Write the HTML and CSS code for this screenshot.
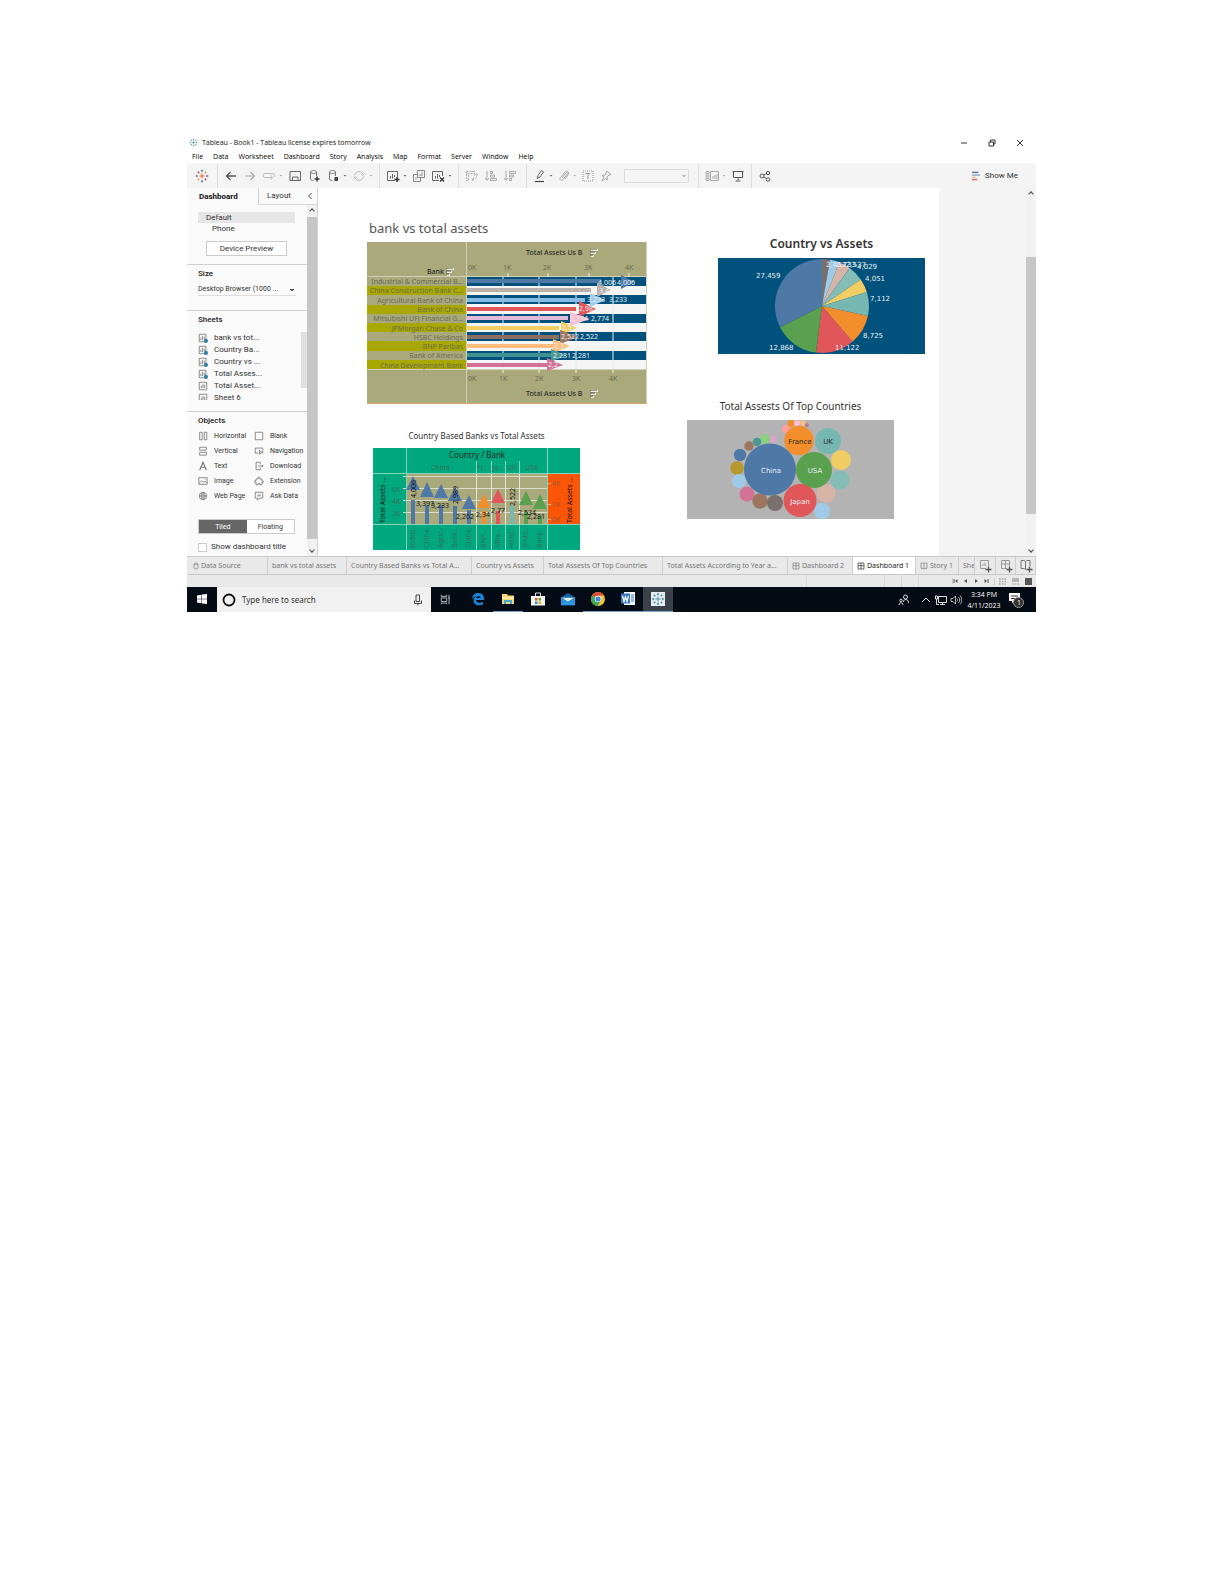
FILE: index.html
```html
<!DOCTYPE html>
<html lang="en">
<head>
<meta charset="utf-8">
<title>Tableau - Book1</title>
<link rel="stylesheet" href="styles.css">
</head>
<body>
<svg class="defs" aria-hidden="true">
  <symbol id="spark" viewBox="0 0 14 14"><path d="M7 4.500v5M4.500 7h5" stroke="#e8762d" stroke-width="1.200"/><path d="M7 0.500v2.600M5.800 1.800h2.400M7 11v2.600M5.800 12.200h2.400" stroke="#5b879b"/><path d="M1.800 5.800v2.400M.6 7h2.400M12.200 5.800v2.400M11 7h2.400" stroke="#7a79a8"/><path d="M3.500 2.500v2M2.500 3.500h2M10.500 9.500v2M9.500 10.500h2" stroke="#c0504d"/><path d="M10.500 2.500v2M9.500 3.500h2M3.500 9.500v2M2.500 10.500h2" stroke="#e0a040"/></symbol>
  <symbol id="spark-blue" viewBox="0 0 14 14"><path d="M7 4.500v5M4.500 7h5M7 1v2.400M5.800 2.200h2.400M7 10.600v2.400M5.800 11.800h2.400M2.200 5.800v2.400M1 7h2.400M11.800 5.800v2.400M10.600 7h2.400M3.500 2.500v2M2.500 3.500h2M10.500 9.500v2M9.500 10.500h2M10.500 2.500v2M9.500 3.500h2M3.500 9.500v2M2.500 10.500h2" stroke="#4a90a8" fill="none"/></symbol>
  <symbol id="sheet" viewBox="0 0 12 12"><path d="M1.500 1.500h9v9h-9zM4 5.500v3M6 3.500v5M8 4.500v4" fill="none" stroke="#777"/></symbol>
  <symbol id="sheet-used" viewBox="0 0 12 12"><path d="M1.500 1.500h8v9h-8zM3.500 5.500v3M5.500 3.500v5M7.500 4.500v3" fill="none" stroke="#777"/><circle cx="9.500" cy="9.500" r="2.500" fill="#2d7fa3"/></symbol>
  <symbol id="grid" viewBox="0 0 12 12"><path d="M1.500 1.500h9v9h-9zM1.500 5.500h9M6 1.500v9" fill="none" stroke="currentColor"/></symbol>
  <symbol id="book" viewBox="0 0 12 12"><path d="M6 2.500v8M1.500 1.500h3L6 2.500l1.500-1h3v8h-3l-1.500 1-1.500-1h-3z" fill="none" stroke="currentColor"/></symbol>
  <symbol id="sort" viewBox="0 0 8 8"><path d="M1 1h7M1 4h5M1 7h3" stroke="#fff" stroke-width="1.600"/><path d="M0 0h7M0 3h5M0 6h3" stroke="#555"/></symbol>
</svg>

<div class="window">
  <header class="titlebar">
    <svg class="app-mark"><use href="#spark-blue"/></svg>
    <h1>Tableau - Book1 - Tableau license expires tomorrow</h1>
    <div class="win-controls">
      <button aria-label="Minimize"><svg viewBox="0 0 8 8"><path d="M1 4h6" stroke="#333"/></svg></button>
      <button aria-label="Restore"><svg viewBox="0 0 8 8"><path d="M1 3h4.500v4H1zM2.500 3V1H7v4H5.500" fill="none" stroke="#333"/></svg></button>
      <button aria-label="Close"><svg viewBox="0 0 8 8"><path d="M1 1l6 6M7 1l-6 6" stroke="#333"/></svg></button>
    </div>
  </header>

  <nav class="menubar" aria-label="Main menu">
    <button>File</button><button>Data</button><button>Worksheet</button><button>Dashboard</button><button>Story</button><button>Analysis</button><button>Map</button><button>Format</button><button>Server</button><button>Window</button><button>Help</button>
  </nav>

  <div class="toolbar">
    <div class="tools"><button aria-label="Start page"><svg viewBox="0 0 14 14"><use href="#spark"/></svg></button></div>
    <div class="tools">
      <button aria-label="Undo"><svg viewBox="0 0 14 14"><path d="M12 7H2.500M6.500 3L2.500 7l4 4" fill="none" stroke="#555" stroke-width="1.300"/></svg></button>
      <button aria-label="Redo"><svg viewBox="0 0 14 14"><path d="M2 7h9.500M7.500 3l4 4-4 4" fill="none" stroke="#aaa" stroke-width="1.200"/></svg></button>
      <button aria-label="Replay"><svg viewBox="0 0 14 14"><path d="M10 8.500H3A2 2 0 0 1 3 4.500h8a2 2 0 0 1 1 3.500M9 6.500l1.500 2L9 10.500" fill="none" stroke="#bbb"/></svg></button>
      <span class="caret pale"></span>
      <button aria-label="Save"><svg viewBox="0 0 14 14"><path d="M2 2.500h10.500v9H2zM4.500 11V8h5.500v3.500" fill="none" stroke="#666"/></svg></button>
      <button aria-label="New data source"><svg viewBox="0 0 14 14"><path d="M3.500 3c0-2 6-2 6 0s-6 2-6 0v7c0 1 2 1.500 3 1.500M9.500 3v4" fill="none" stroke="#777"/><path d="M10 7.500v5M7.500 10h5" stroke="#333" stroke-width="1.500"/></svg></button>
      <button aria-label="Pause updates"><svg viewBox="0 0 14 14"><path d="M3.500 3c0-2 6-2 6 0s-6 2-6 0v7c0 1 2 1.500 3 1.500M9.500 3v4" fill="none" stroke="#777"/><path d="M8.500 8h3.500v4H8.500z" fill="#444"/></svg></button>
      <span class="caret"></span>
      <button aria-label="Refresh"><svg viewBox="0 0 14 14"><path d="M2.500 6.500a4.500 4.500 0 0 1 8.500-1.500M11.500 7.500a4.500 4.500 0 0 1-8.500 1.500M12.500 4.500l-1.500 2-2-1.500M1.500 9.500L3 7.500 5 9" fill="none" stroke="#bbb"/></svg></button>
      <span class="caret pale"></span>
    </div>
    <div class="tools">
      <button aria-label="New worksheet"><svg viewBox="0 0 14 14"><path d="M9 11.500H1.500v-9h10V8M4.500 7v2.500M6.500 5v4.500M8.500 6v2" fill="none" stroke="#666"/><path d="M11 8v5M8.500 10.500h5" stroke="#333" stroke-width="1.500"/></svg></button>
      <span class="caret"></span>
      <button aria-label="Duplicate"><svg viewBox="0 0 14 14"><path d="M5.500 1.500h7v7h-7zM5.500 5.500h-4v7h7V8.500M8 5v2M10 3.500V7M4 8.500v2" fill="none" stroke="#888"/></svg></button>
      <button aria-label="Clear sheet"><svg viewBox="0 0 14 14"><path d="M8 11.500H1.500v-9h10V7M4.500 7v2.500M6.500 5v4.500M8.500 6v2" fill="none" stroke="#666"/><path d="M9 8.500l4 4M13 8.500l-4 4" stroke="#333" stroke-width="1.300"/></svg></button>
      <span class="caret"></span>
    </div>
    <div class="tools wide-end">
      <button aria-label="Swap"><svg viewBox="0 0 14 14"><path d="M1.500 2.500h8v2h-8zM1.500 5v6.500h2V5M11 5.500c1.500 3-.5 5-4 5M9 8.500l-2 2 2 2M9.500 6.500l1.500-2 2 1.500" fill="none" stroke="#aaa" stroke-dasharray="2 1"/></svg></button>
      <button aria-label="Sort ascending"><svg viewBox="0 0 14 14"><path d="M3 2v9M1 9l2 2.500L5 9M6.500 2.500h2v2h-2zM6.500 6h4v2h-4zM6.500 9.500h6v2h-6z" fill="none" stroke="#aaa"/></svg></button>
      <button aria-label="Sort descending"><svg viewBox="0 0 14 14"><path d="M3 2v9M1 9l2 2.500L5 9M6.500 2.500h6v2h-6zM6.500 6h4v2h-4zM6.500 9.500h2v2h-2z" fill="none" stroke="#aaa"/></svg></button>
    </div>
    <div class="tools tight">
      <button aria-label="Highlight"><svg viewBox="0 0 14 14"><path d="M4 9.500l1-3 3.500-5 2 1.500L7 8z" fill="none" stroke="#666"/><path d="M2 12.500h9" stroke="#444" stroke-width="1.200"/></svg></button>
      <span class="caret"></span>
      <button aria-label="Group"><svg viewBox="0 0 14 14"><path d="M5 9l4-5c1-1 2 0 1.500 1L6 10.500c-2 2-4 0-2.500-2L8 3c2-2 5 0 3 3L8 10" fill="none" stroke="#aaa"/></svg></button>
      <span class="caret pale"></span>
      <button aria-label="Labels"><svg viewBox="0 0 14 14"><path d="M2 2h10v10H2z" fill="none" stroke="#999" stroke-dasharray="1 1"/><path d="M4.500 4.500h5M7 4.500V10" stroke="#999"/></svg></button>
      <button aria-label="Pin"><svg viewBox="0 0 14 14"><path d="M8 2l4 3.500-2 .5-2 2 .5 3-2-1.500L3 12l2-4-2-1.500 3-.5z" fill="none" stroke="#aaa"/></svg></button>
      <select class="fit" aria-label="Fit" disabled><option></option></select>
    </div>
    <div class="tools">
      <button aria-label="Cards"><svg viewBox="0 0 14 14"><path d="M5.500 2.500h8v9h-8zM1 2.500h3v2H1zM1 6h3v2H1zM1 9.500h3v2H1zM8 7v3M10 6v4M12 5v5" fill="none" stroke="#aaa"/></svg></button>
      <span class="caret pale"></span>
      <button aria-label="Presentation mode"><svg viewBox="0 0 14 14"><path d="M1.500 2.500h11M2.500 3v5.500h9V3M7 8.500v3M4.500 12h5" fill="none" stroke="#555"/></svg></button>
    </div>
    <div class="tools">
      <button aria-label="Share"><svg viewBox="0 0 14 14"><g fill="none" stroke="#555"><circle cx="4" cy="7" r="2"/><circle cx="10" cy="4" r="1.700"/><circle cx="10" cy="10.500" r="1.700"/><path d="M6 6l2.500-1.500M6 8l2.500 1.500"/></g></svg></button>
    </div>
    <button class="show-me"><svg viewBox="0 0 10 10"><path d="M0 1h7" stroke="#6b6a94" stroke-width="1.600"/><path d="M0 4h9" stroke="#8ba7cb" stroke-width="1.500"/><path d="M0 6.500h4" stroke="#f0b07a" stroke-width="1.200"/><path d="M0 9h6" stroke="#dd6b6b" stroke-width="1.600"/></svg>Show Me</button>
  </div>

  <main class="workspace">
    <aside class="side">
      <div class="side-tabs"><button class="on">Dashboard</button><button class="off">Layout<svg viewBox="0 0 6 8"><path d="M4.500 1L1.500 4l3 3" fill="none" stroke="#555"/></svg></button></div>
      <div class="side-scroll">
        <div class="side-body">
          <section class="devices">
            <ul><li class="picked">Default</li><li class="nested">Phone</li></ul>
            <button class="preview">Device Preview</button>
          </section>
          <section class="size">
            <h2><label for="size">Size</label></h2>
            <select id="size"><option>Desktop Browser (1000 ...</option></select>
          </section>
          <section class="sheets">
            <h2>Sheets</h2>
            <div class="sheet-list">
              <ul>
                <li><svg><use href="#sheet-used"/></svg>bank vs tot...</li>
                <li><svg><use href="#sheet-used"/></svg>Country Ba...</li>
                <li><svg><use href="#sheet-used"/></svg>Country vs ...</li>
                <li><svg><use href="#sheet-used"/></svg>Total Asses...</li>
                <li><svg><use href="#sheet"/></svg>Total Asset...</li>
                <li><svg><use href="#sheet"/></svg>Sheet 6</li>
              </ul>
              <span class="list-thumb"></span>
            </div>
          </section>
          <section class="objects">
            <h2>Objects</h2>
            <ul>
              <li><svg viewBox="0 0 12 12"><path d="M2 1.500h3v9H2zM7.500 1.500h3v9h-3z"/></svg>Horizontal</li>
              <li><svg viewBox="0 0 12 12"><path d="M1.500 1.500h9v9h-9z"/></svg>Blank</li>
              <li><svg viewBox="0 0 12 12"><path d="M2 5V1.500h8V5zM2 7.500h8V11H2z"/></svg>Vertical</li>
              <li><svg viewBox="0 0 12 12"><path d="M5 8.500H1.500v-6h9v6H10M6 5l1 5 1.500-2H10z"/></svg>Navigation</li>
              <li><svg viewBox="0 0 12 12"><path d="M2 11L6 1.500 10 11M3.500 7.500h5" stroke-width="1.400"/></svg>Text</li>
              <li><svg viewBox="0 0 12 12"><path d="M7.500 4V1.500h-5v9h5V8M5 6h6M9.500 4.500L11 6 9.500 7.500"/></svg>Download</li>
              <li><svg viewBox="0 0 12 12"><path d="M1 2h10v8H1zM1.500 8.500l3-3 2 2 2-1 2 1.500M8 4h1"/></svg>Image</li>
              <li><svg viewBox="0 0 12 12"><path d="M2.500 10.500V8H1V5.500h1.500V3.500H5v-2h2v2h2.500V6H11v2H9.500v2.500H7V9H5v1.500z"/></svg>Extension</li>
              <li><svg viewBox="0 0 12 12"><circle cx="6" cy="6" r="4.500"/><path d="M1.500 6h9M6 1.500v9M6 1.500c-3 3-3 6 0 9M6 1.500c3 3 3 6 0 9"/></svg>Web Page</li>
              <li><svg viewBox="0 0 12 12"><path d="M1.500 1.500h9v7H6.500L4 11V8.500H1.500zM4.500 5v1.500M6 3.500v3M7.500 4.500v2"/></svg>Ask Data</li>
            </ul>
            <div class="segmented"><button class="on">Tiled</button><button>Floating</button></div>
            <label class="show-title"><input type="checkbox">Show dashboard title</label>
          </section>
        </div>
        <div class="scrollbar side-bar"><i class="up"></i><b></b><i class="down"></i></div>
      </div>
    </aside>

    <div class="dashboard">
      <div class="column left">
        <figure class="banks">
          <figcaption>bank vs total assets</figcaption>
          <svg viewBox="0 0 280 162" class="chart" role="img" aria-label="bank vs total assets">
            <path d="M0 0h280v162H0z" fill="#a9a97c"/>
            <path d="M100 35h180v92H100z" fill="#f5f5f5"/>
            <path d="M0 44h99v9H0zM0 63h99v9H0zM0 81h99v9H0zM0 99h99v10H0zM0 118h99v9H0z" fill="#a8a800"/>
            <path d="M100 35h179v9H100zM100 53h179v9H100zM100 72h179v9H100zM100 90h179v9H100zM100 109h179v9H100z" fill="#00527c"/>
            <path d="M136 35v92M172 35v92M209 35v92M246 35v92" stroke="#e8eef2"/>
            <path d="M99.500 0v162M0 34.500h280M0 127.500h280M279.500 0v162" stroke="#d0d0b8"/>
            <path d="M141 31v4M181 31v4M222 31v4M262 31v4M136 128v3M172 128v3M209 128v3M246 128v3" stroke="#f0f0e6"/>
            <path d="M0 161.500h280" stroke="#d6a86c"/>
            <g class="bars">
              <path d="M100 39h134" stroke="#4e79a7"/><path d="M100 48h124" stroke="#bab0ac"/><path d="M100 58h118" stroke="#85bde8"/><path d="M100 67h109" stroke="#e15759"/><path d="M100 76h101" stroke="#e3b9dc"/><path d="M100 86h92" stroke="#f1ce63"/><path d="M100 95h92" stroke="#8c6d62"/><path d="M100 104h86" stroke="#ffbe7d"/><path d="M100 113h84" stroke="#3f9292"/><path d="M100 123h80" stroke="#d37295"/>
            </g>
            <path d="M254 33l14 7-14 7z" fill="#4e79a7"/><path d="M230 41l14 7-14 7z" fill="#bab0ac"/><path d="M223 51l15 7-15 7z" fill="#a0cbe8"/><path d="M212 59l17 8-17 8z" fill="#e15759"/><path d="M203 70l20 7-20 7z" fill="#fabfd2"/><path d="M194 79l16 7-16 7z" fill="#f1ce63"/><path d="M193 88l18 7-18 7z" fill="#9d7660"/><path d="M186 97l17 7-17 7z" fill="#ffbe7d"/><path d="M184 107l14 6-14 7z" fill="#499894"/><path d="M180 116l16 7-16 6z" fill="#d37295"/>
            <g class="t7 white"><text x="231" y="43">4,006</text><text x="250" y="43">4,006</text><text x="232" y="51">3,4</text><text x="220" y="60">3,233</text><text x="242" y="60">3,233</text><text x="212" y="69">2,98</text><text x="203" y="79">2,774</text><text x="224" y="79">2,774</text><text x="195" y="88">2,5</text><text x="194" y="97">2,522</text><text x="213" y="97">2,522</text><text x="187" y="106">2,3</text><text x="186" y="116">2,281</text><text x="205" y="116">2,281</text><text x="181" y="125">2,2</text></g>
            <g class="t7 olive end"><text x="96" y="42">Industrial &amp; Commercial B...</text><text x="96" y="51">China Construction Bank C...</text><text x="96" y="61">Agricultural Bank of China</text><text x="96" y="70">Bank of China</text><text x="96" y="79">Mitsubishi UFJ Financial G...</text><text x="96" y="89">JPMorgan Chase &amp; Co</text><text x="96" y="98">HSBC Holdings</text><text x="96" y="107">BNP Paribas</text><text x="96" y="116">Bank of America</text><text x="96" y="126">China Development Bank</text></g>
            <g class="t7 olive"><text x="101" y="28">0K</text><text x="136" y="28">1K</text><text x="176" y="28">2K</text><text x="217" y="28">3K</text><text x="258" y="28">4K</text><text x="101" y="139">0K</text><text x="132" y="139">1K</text><text x="168" y="139">2K</text><text x="205" y="139">3K</text><text x="242" y="139">4K</text></g>
            <g class="t7 dark strong"><text x="60" y="32">Bank</text><text x="159" y="13">Total Assets Us B</text><text x="159" y="154">Total Assets Us B</text></g>
            <use href="#sort" x="79" y="26" width="8" height="8"/><use href="#sort" x="223" y="7" width="8" height="8"/><use href="#sort" x="223" y="148" width="8" height="8"/>
          </svg>
        </figure>
        <figure class="countries">
          <figcaption>Country Based Banks vs Total Assets</figcaption>
          <svg viewBox="0 0 207 102" class="chart" role="img" aria-label="Country Based Banks vs Total Assets">
            <path d="M0 0h207v102H0z" fill="#00a87e"/>
            <path d="M33 26h141v50H33z" fill="#a9a97c"/>
            <path d="M175 26h32v50h-32z" fill="#fb5607"/>
            <path d="M30 28.500h144M30 40.500h144M30 52.500h144M30 64.500h144" stroke="#dcdcc8"/>
            <path d="M174 35.500h4M174 56.500h4M174 71.500h4" stroke="#f8b18e"/>
            <path d="M0 25.500h207M0 76.500h207M33.500 0v102M174.500 0v102M103.500 13v89M118.500 13v89M132.500 13v89M146.500 13v89" stroke="#86d3bb" fill="none"/>
            <path d="M103.500 26v50M118.500 26v50M132.500 26v50M146.500 26v50" stroke="#e6e6da"/>
            <g stroke-width="4"><path d="M40 52v24M54 57v19M68 57v19M82 58v18M96 62v14" stroke="#4e79a7"/><path d="M111 63v13" stroke="#f28e2b"/><path d="M125 63v13" stroke="#e15759"/><path d="M139 58v18" stroke="#76b7b2"/><path d="M153 64v12M167 68v8" stroke="#59a14f"/></g>
            <path d="M40 28l7 14H33zM54 34l7 15H47zM68 36l7 14H61zM82 39l7 14H75zM96 47l7 14H89z" fill="#4e79a7"/><path d="M111 46l7 14h-14z" fill="#f28e2b"/><path d="M125 41l7 14h-14z" fill="#e15759"/><path d="M153 43l7 14h-14zM167 46l7 15h-14z" fill="#59a14f"/>
            <g class="t7 ink"><text x="43" y="58">3,397</text><text x="58" y="60">3,233</text><text x="83" y="71">2,202</text><text x="103" y="69">2,34</text><text x="118" y="65">2,77</text><text x="145" y="67">2,534</text><text x="154" y="71">2,281</text><text transform="translate(43 50) rotate(-90)">4,006</text><text transform="translate(85 56) rotate(-90)">2,989</text><text transform="translate(142 58) rotate(-90)">2,522</text><text transform="translate(12 75) rotate(-90)">Total Assets ...</text><text transform="translate(199 75) rotate(-90)">Total Assets ...</text></g>
            <g class="t7 green"><text x="58" y="22">China</text><text x="104" y="22">Fr..</text><text x="119" y="22">Ja..</text><text x="134" y="22">UK</text><text x="152" y="22">USA</text><text x="19" y="44">6K</text><text x="19" y="56">4K</text><text x="19" y="68">2K</text><text transform="translate(42 100) rotate(-90)">Indus..</text><text transform="translate(56 100) rotate(-90)">China..</text><text transform="translate(70 100) rotate(-90)">Agric..</text><text transform="translate(84 100) rotate(-90)">Bank..</text><text transform="translate(98 100) rotate(-90)">China..</text><text transform="translate(113 100) rotate(-90)">BNP..</text><text transform="translate(127 100) rotate(-90)">Mits..</text><text transform="translate(141 100) rotate(-90)">HSBC..</text><text transform="translate(155 100) rotate(-90)">JPMo..</text><text transform="translate(169 100) rotate(-90)">Bank..</text></g>
            <g class="t7 rust"><text x="179" y="38">4K</text><text x="179" y="59">2K</text><text x="179" y="74">0K</text></g>
            <text class="t8 dark" x="76" y="10">Country / Bank</text>
          </svg>
        </figure>
      </div>
      <div class="column right">
        <figure class="pie">
          <figcaption>Country vs Assets</figcaption>
          <svg viewBox="0 0 207 96" class="chart" role="img" aria-label="Country vs Assets">
            <path d="M0 0h207v96H0z" fill="#00527c"/>
            <path d="M104 48V1A47 47 0 0 1 112 1.700z" fill="#79706e"/><path d="M104 48L112 1.700A47 47 0 0 1 121.300 4.300z" fill="#a0cbe8"/><path d="M104 48L121.300 4.300A47 47 0 0 1 131.600 10z" fill="#d7b5a6"/><path d="M104 48L131.600 10A47 47 0 0 1 142.700 21.400z" fill="#86bcb6"/><path d="M104 48L142.700 21.400A47 47 0 0 1 148.800 33.900z" fill="#f1ce63"/><path d="M104 48L148.800 33.900A47 47 0 0 1 149.900 58.100z" fill="#76b7b2"/><path d="M104 48L149.900 58.100A47 47 0 0 1 134.500 83.800z" fill="#f28e2b"/><path d="M104 48L134.500 83.800A47 47 0 0 1 98 94.600z" fill="#e15759"/><path d="M104 48L98 94.600A47 47 0 0 1 62.100 69.300z" fill="#59a14f"/><path d="M104 48L62.100 69.300A47 47 0 0 1 104 1z" fill="#4e79a7"/>
            <g class="t7 white"><text x="38" y="20">27,459</text><text x="108" y="9">2,457</text><text x="118" y="9">2,733</text><text x="128" y="9">2,537</text><text x="139" y="11">4,029</text><text x="147" y="23">4,051</text><text x="152" y="43">7,112</text><text x="145" y="80">8,725</text><text x="117" y="92">11,122</text><text x="51" y="92">12,868</text></g>
          </svg>
        </figure>
        <figure class="bubbles">
          <figcaption>Total Assests Of Top Countries</figcaption>
          <svg viewBox="0 0 207 99" class="chart" role="img" aria-label="Total Assests Of Top Countries">
            <path d="M0 0h207v99H0z" fill="#b3b3b3"/>
            <circle cx="99" cy="9" r="4" fill="#ff9d9a"/><circle cx="104" cy="3.500" r="3.500" fill="#f28e2b"/><circle cx="110" cy="3" r="3" fill="#fabfd2"/><circle cx="116" cy="3" r="2.700" fill="#ffbe7d"/><circle cx="120" cy="5" r="2" fill="#b07aa1"/><circle cx="86" cy="19" r="4" fill="#d4a6c8"/><circle cx="78" cy="19" r="4.700" fill="#8cd17d"/><circle cx="70" cy="22" r="4.300" fill="#499894"/><circle cx="62" cy="26" r="4.700" fill="#9d7660"/><circle cx="53" cy="35" r="6.200" fill="#4e79a7"/><circle cx="50" cy="48" r="6.800" fill="#b6992d"/><circle cx="52" cy="61" r="7" fill="#a0cbe8"/><circle cx="60" cy="74" r="7.600" fill="#d37295"/><circle cx="73" cy="81" r="7.700" fill="#9d7660"/><circle cx="88" cy="83" r="8" fill="#79706e"/>
            <circle cx="135" cy="91" r="8" fill="#a0cbe8"/><circle cx="139" cy="73" r="9.500" fill="#d7b5a6"/><circle cx="153" cy="60" r="9.700" fill="#86bcb6"/><circle cx="154" cy="40" r="10" fill="#f1ce63"/><circle cx="141" cy="21" r="13" fill="#76b7b2"/><circle cx="112" cy="20.500" r="14.700" fill="#f28e2b"/><circle cx="83" cy="49.500" r="26" fill="#4e79a7"/><circle cx="127" cy="50" r="18" fill="#59a14f"/><circle cx="113" cy="80.500" r="16.500" fill="#e15759"/>
            <g class="t7 mid"><text class="white" x="84" y="53">China</text><text class="white" x="128" y="53">USA</text><text class="white" x="113" y="84">Japan</text><text class="dark" x="113" y="24">France</text><text class="dark" x="141" y="24">UK</text></g>
          </svg>
        </figure>
      </div>
    </div>
    <div class="gutter"></div>
    <div class="scrollbar page-bar"><i class="up"></i><b></b><i class="down"></i></div>
  </main>

  <nav class="sheet-tabs" aria-label="Sheets">
    <button class="source"><svg viewBox="0 0 8 12"><path d="M1 3c0-2 6-2 6 0v6c0 2-6 2-6 0zM1 3c0 1.500 6 1.500 6 0" fill="none" stroke="currentColor"/></svg>Data Source</button>
    <button>bank vs total assets</button>
    <button>Country Based Banks vs Total A...</button>
    <button>Country vs Assets</button>
    <button>Total Assests Of Top Countries</button>
    <button>Total Assets According to Year a...</button>
    <button><svg><use href="#grid"/></svg>Dashboard 2</button>
    <button class="current"><svg><use href="#grid"/></svg>Dashboard 1</button>
    <button><svg><use href="#book"/></svg>Story 1</button>
    <button>She</button>
    <button class="add" aria-label="New worksheet"><svg viewBox="0 0 14 14"><path d="M8 9.500H2.500v-8h8V7M5 5v2M7 4v3" fill="none" stroke="#999"/><path d="M10.500 7.500v6M7.500 10.500h6" stroke="#555" stroke-width="1.300"/></svg></button>
    <button class="add" aria-label="New dashboard"><svg viewBox="0 0 14 14"><path d="M8 9.500H2.500v-8h8V7M2.500 5h8M6.500 1.500v8" fill="none" stroke="#999"/><path d="M10.500 7.500v6M7.500 10.500h6" stroke="#555" stroke-width="1.300"/></svg></button>
    <button class="add" aria-label="New story"><svg viewBox="0 0 14 14"><path d="M6.500 2.500v8M11 7V1.500H8l-1.500 1-1.500-1H2v8h3l1.500 1" fill="none" stroke="#777"/><path d="M10.500 7.500v6M7.500 10.500h6" stroke="#555" stroke-width="1.300"/></svg></button>
  </nav>

  <div class="status">
    <span class="cell wide"></span><span class="cell"></span><span class="cell"></span><span class="cell"></span>
    <div class="pager">
      <button aria-label="First"><svg viewBox="0 0 6 6"><path d="M1 1v4M4.500 1v4L2 3z" fill="#555"/><path d="M1 1v4" stroke="#555"/></svg></button>
      <button aria-label="Previous"><svg viewBox="0 0 6 6"><path d="M4 1v4L1 3z" fill="#555"/></svg></button>
      <button aria-label="Next"><svg viewBox="0 0 6 6"><path d="M2 1v4l3-2z" fill="#555"/></svg></button>
      <button aria-label="Last"><svg viewBox="0 0 6 6"><path d="M1.500 1v4L4 3z" fill="#555"/><path d="M5 1v4" stroke="#555"/></svg></button>
    </div>
    <div class="views">
      <button aria-label="Show tabs"><svg viewBox="0 0 7 7"><path d="M0 1h7M0 3.500h7M0 6h7" stroke="#aaa" stroke-dasharray="1.700 1" stroke-width="1.500"/></svg></button>
      <button aria-label="Show filmstrip"><svg viewBox="0 0 7 7"><path d="M0 0h7v4H0z" fill="#b5b5b5"/><path d="M0 6h7" stroke="#b5b5b5" stroke-dasharray="1.700 1" stroke-width="1.500"/></svg></button>
      <button aria-label="Show sheet sorter"><svg viewBox="0 0 7 7"><path d="M0 0h7v7H0z" fill="#555"/></svg></button>
    </div>
  </div>

  <footer class="taskbar">
    <button class="start" aria-label="Start"><svg viewBox="0 0 10 10"><path d="M0 1.400l4.500-.7v4H0zM5 .6l5-.6v4.700H5zM0 5.300h4.500v4L0 8.600zM5 5.300h5V10l-5-.6z" fill="#fff"/></svg></button>
    <div class="search"><svg viewBox="0 0 14 14"><circle cx="7" cy="7" r="5.500" fill="none" stroke="#111" stroke-width="1.800"/></svg><input type="text" placeholder="Type here to search" aria-label="Search"><svg viewBox="0 0 14 14"><path d="M5 2h3.500v6.500H5zM3.500 7.500v3h7v-3M6.800 10.500v2" fill="none" stroke="#444"/></svg></div>
    <button class="view" aria-label="Task view"><svg viewBox="0 0 14 14"><path d="M1.500 5h7v4.500h-7zM1.500 1v2h7V1M1.500 13v-1.500h7V13M11.500 1v12M10.500 5h2" fill="none" stroke="#ddd"/></svg></button>
    <button aria-label="Edge"><svg viewBox="0 0 14 14"><path d="M1 7C1.500 2.500 4.500 1 7.500 1 11.500 1 13 4 13 6.500V8H5c0 3 4 3.500 7 2v2.500C9 14 2.500 14 2.500 8.500 2.500 6 4.500 4.500 6 4 3.500 4.500 2 5.500 1 7zM5 6h4.500C9.500 3.500 5.500 3.500 5 6z" fill="#1a84d8"/></svg></button>
    <button class="open" aria-label="File Explorer"><svg viewBox="0 0 14 14"><path d="M1 2h5l1 1.500h6V12H1z" fill="#f2d675"/><path d="M1 5h12v2H1z" fill="#fbeaa8"/><path d="M3 12V8h8v4H9V10H5v2z" fill="#48a8c8"/></svg></button>
    <button aria-label="Store"><svg viewBox="0 0 14 14"><path d="M4.500 4V1h5v3" fill="none" stroke="#ddd"/><path d="M0 4h14v9.500H0z" fill="#f4f4f4"/><path d="M4 6h2.500v2.500H4z" fill="#e2562b"/><path d="M7.500 6H10v2.500H7.500z" fill="#6aa32e"/><path d="M4 9.500h2.500V12H4z" fill="#258bcb"/><path d="M7.500 9.500H10V12H7.500z" fill="#e8aa1c"/></svg></button>
    <button aria-label="Mail"><svg viewBox="0 0 16 14"><path d="M0 5l8-5 8 5v9H0z" fill="#1164a6"/><path d="M1 5.500h14L8 10z" fill="#e8f3fa"/><path d="M0 5l8 5 8-5v9H0z" fill="#2b95dd"/></svg></button>
    <button class="open" aria-label="Chrome"><svg viewBox="0 0 14 14"><circle cx="7" cy="7" r="7" fill="#f4c530"/><path d="M7 7L1 3.400A7 7 0 0 1 13 3.500H7z" fill="#dc4a3b"/><path d="M1 3.400A7 7 0 0 0 6.500 14L10 8.700 7 7z" fill="#3ba557"/><circle cx="7" cy="7" r="3.300" fill="#fff"/><circle cx="7" cy="7" r="2.600" fill="#4483e0"/></svg></button>
    <button class="open" aria-label="Word"><svg viewBox="0 0 14 14"><path d="M3 0h11v13H3z" fill="#f4f7fb"/><path d="M0 1.500h9v10H0z" fill="#3b78c4"/><path d="M10 3h3M10 5h3M10 7h3M10 9h3" stroke="#3b78c4"/><path d="M1.500 4l1.500 5.500L4.500 5 6 9.500 7.500 4" fill="none" stroke="#fff" stroke-width="1.200"/></svg></button>
    <button class="open active" aria-label="Tableau"><svg viewBox="0 0 14 14"><path d="M0 0h14v14H0z" fill="#e8eef0"/><use href="#spark-blue"/></svg></button>
    <div class="tray">
      <svg viewBox="0 0 12 12"><g fill="none" stroke="#ddd"><circle cx="7.500" cy="3" r="2"/><path d="M5.500 8c0-3.500 5-3.500 5 1"/><circle cx="3" cy="6.500" r="1.300"/><path d="M1 11c0-3 4-3 4 0"/></g></svg>
      <svg class="gap-before" viewBox="0 0 12 12"><path d="M2 8l4-4 4 4" fill="none" stroke="#eee"/></svg>
      <svg viewBox="0 0 12 12"><path d="M3.500 2.500h8v6h-8zM7.500 8.500v2M5 10.500h5M.5 2v3h2V2zM1.500 5v5.500H4" fill="none" stroke="#ddd"/></svg>
      <svg viewBox="0 0 12 12"><path d="M1 4.500h2L5.500 2v8L3 7.500H1zM7 4.500c1 1 1 2 0 3M8.500 3c1.700 2 1.700 4 0 6M10 1.500c2.500 3 2.500 6 0 9" fill="none" stroke="#ddd" stroke-width=".8"/></svg>
      <time datetime="2023-04-11T15:34">3:34 PM<br>4/11/2023</time>
      <svg class="note" viewBox="0 0 16 16"><path d="M1 1h11v8H6l-2 2.500V9H1z" fill="#fff"/><path d="M3 4h7M3 6.500h7" stroke="#333"/><circle cx="10.500" cy="10.500" r="5" fill="#333" stroke="#999"/><text x="9" y="13">1</text></svg>
    </div>
  </footer>
</div>
</body>
</html>
```
FILE: styles.css
```css
* { box-sizing: border-box; }
body { margin: 0; padding: 134px 188px 0 187px; background: #fff; color: #333; font: 7px/12px Roboto, "Noto Sans", sans-serif; }
button, select, input { margin: 0; padding: 0; border: 0; background: none; color: inherit; font: inherit; }
ul { margin: 0; padding: 0; list-style: none; }
h1, h2, figure { margin: 0; }
svg { display: block; flex: none; }
.defs { position: absolute; width: 0; height: 0; }

.titlebar { display: flex; align-items: center; height: 17px; padding-left: 2px; font-family: "Open Sans", sans-serif; }
.titlebar h1 { margin-left: 4px; font-size: 7px; font-weight: 400; color: #111; }
.app-mark { width: 9px; height: 9px; }
.win-controls { display: flex; gap: 20px; margin-left: auto; padding-right: 12px; }
.win-controls svg { width: 8px; height: 8px; }

.menubar { display: flex; gap: 10px; height: 12px; padding-left: 5px; color: #000; font-family: "Open Sans", sans-serif; }

.toolbar { display: flex; align-items: center; height: 25px; background: #f4f4f4; }
.tools { display: flex; align-items: center; gap: 5px; height: 24px; padding: 0 6px; border-left: 1px solid #dcdcdc; }
.tools:first-child { padding: 0 8px; border: 0; }
.tools.wide-end { padding-right: 9px; }
.tools.tight { gap: 4px; padding-right: 9px; }
.tools svg { width: 14px; height: 14px; }
.caret { width: 4px; height: 2px; margin-left: -2px; background: #666; clip-path: polygon(0 0, 100% 0, 50% 100%); }
.caret.pale { background: #aaa; }
.fit { width: 65px; height: 14px; margin-left: 7px; border: 1px solid #d4d4d4; appearance: none; background: linear-gradient(#aaa, #aaa) 57px 5px / 4px 1px no-repeat, linear-gradient(#aaa, #aaa) 58px 6px / 2px 1px no-repeat; }
.show-me { display: flex; align-items: center; gap: 4px; margin-left: auto; padding-right: 18px; font-size: 8px; }
.show-me svg { width: 9px; height: 10px; }

.workspace { display: flex; height: 368px; }
.side { display: flex; flex-direction: column; width: 131px; border-right: 1px solid #d4d4d4; background: #fafafa; }
.side-tabs { display: flex; height: 17px; font-size: 8px; }
.side-tabs .on { width: 71px; padding-left: 12px; color: #111; font-weight: 700; text-align: left; }
.side-tabs .off { display: flex; flex: 1; align-items: center; justify-content: space-between; padding: 0 4px 0 8px; border: solid #d4d4d4; border-width: 0 0 1px 1px; }
.side-tabs svg { width: 6px; height: 8px; }
.side-scroll { display: flex; flex: 1; min-height: 0; }
.side-body { flex: 1; min-width: 0; }
.side-body section { padding: 3px 0 0 11px; border-bottom: 1px solid #d0d0d0; }
.side-body section:last-child { border: 0; }
.side-body h2 { font-size: 8px; line-height: 12px; font-weight: 500; color: #222; }
.side-body .devices { padding: 7px 12px 8px 11px; font-size: 8px; }
.devices li { padding-left: 8px; }
.devices .picked { background: #e6e6e6; line-height: 11px; }
.devices .nested { padding-left: 14px; }
.preview { display: block; width: 81px; height: 15px; margin: 6px 0 0 8px; border: 1px solid #ccc; background: #fff; }
.side-body .size { padding-bottom: 14px; }
.size select { display: block; width: 98px; height: 13px; margin-top: 3px; border-bottom: 1px solid #ddd; appearance: none; background: linear-gradient(#555, #555) 92px 6px / 4px 1px no-repeat, linear-gradient(#555, #555) 93px 7px / 2px 1px no-repeat; }
.side-body .sheets { padding-bottom: 11px; }
.sheet-list { display: flex; justify-content: space-between; height: 68px; margin-top: 6px; overflow: hidden; font-size: 8px; }
.sheet-list li { display: flex; align-items: center; gap: 6px; height: 12px; }
.sheet-list svg { width: 10px; height: 10px; }
.list-thumb { width: 6px; height: 56px; background: #e0e0e0; }
.objects ul { display: grid; grid-template-columns: 56px 1fr; grid-auto-rows: 15px; margin-top: 1px; }
.objects li { display: flex; align-items: center; gap: 6px; white-space: nowrap; }
.objects li svg { width: 10px; height: 10px; fill: none; stroke: #777; }
.segmented { display: grid; grid-template-columns: 1fr 1fr; width: 97px; height: 15px; margin-top: 16px; border: 1px solid #ccc; background: #fff; }
.segmented .on { background: #666; color: #fff; }
.show-title { display: flex; align-items: center; gap: 4px; margin-top: 7px; font-size: 8px; white-space: nowrap; }
.show-title input { width: 9px; height: 9px; border: 1px solid #ccc; background: #fff; appearance: none; }

.scrollbar { display: flex; flex: none; flex-direction: column; align-items: center; width: 10px; background: #f1f1f1; }
.scrollbar b { width: 10px; background: #c6c6c6; }
.scrollbar i { width: 4px; height: 4px; margin: 4px; border: solid #444; border-width: 1px 0 0 1px; transform: rotate(45deg); }
.scrollbar .down { margin-top: auto; transform: rotate(225deg); }
.side-bar b { height: 322px; }
.page-bar b { height: 257px; margin-top: 57px; }

.dashboard { display: flex; flex: 1; gap: 40px; padding-left: 49px; background: #fff; font-family: "Noto Sans", sans-serif; overflow: hidden; }
.column { display: flex; flex: none; flex-direction: column; align-items: flex-start; }
.gutter { flex: none; width: 87px; background: #f4f4f4; }
figcaption { color: #333; text-align: center; white-space: nowrap; }
.chart { width: 100%; }
.banks { width: 280px; margin-top: 30px; }
.banks figcaption { height: 24px; padding-left: 2px; color: #555; font-size: 13px; line-height: 20px; text-align: left; }
.countries { width: 207px; margin: 25px 0 0 6px; }
.countries figcaption { height: 19px; font-size: 8px; line-height: 14px; }
.pie { width: 207px; margin: 46px 0 0 31px; }
.pie figcaption { height: 24px; font-size: 12px; line-height: 20px; font-weight: 600; }
.bubbles { width: 207px; margin-top: 42px; }
.bubbles figcaption { height: 24px; font-size: 10px; line-height: 20px; }
.bars { stroke-width: 4px; }
.t7 { font-size: 7px; }
.t8 { font-size: 8px; }
.white { fill: #e8eff4; }
.olive { fill: #6c6c52; }
.dark { fill: #2b2b2b; }
.ink { fill: #111; }
.green { fill: #356f5c; }
.rust { fill: #a3552f; }
.strong { font-weight: 500; }
.end { text-anchor: end; }
.mid { text-anchor: middle; }
.pie .t7, .bubbles .t7 { font-family: "DejaVu Sans", sans-serif; }

.sheet-tabs { display: grid; grid-template-columns: 81fr 79fr 125fr 72fr 119fr 125fr 65fr 63fr 43fr 16fr 21fr 20fr 20fr; height: 19px; border: solid #c8c8c8; border-width: 1px 0; background: #e9e9e9; color: #777; font-family: "Noto Sans", sans-serif; }
.sheet-tabs button { display: flex; align-items: center; gap: 2px; min-width: 0; padding-left: 4px; border-right: 1px solid #cfcfcf; overflow: hidden; white-space: nowrap; }
.sheet-tabs svg { width: 8px; height: 8px; }
.sheet-tabs .source { padding-left: 6px; }
.sheet-tabs .source svg { width: 6px; }
.sheet-tabs .current { background: #fff; color: #222; }
.sheet-tabs .add { padding-left: 3px; }
.sheet-tabs .add svg { width: 14px; height: 14px; }

.status { display: flex; align-items: center; height: 12px; background: #e9e9e9; }
.status .cell { width: 17px; height: 12px; border-left: 1px solid #d8d8d8; }
.status .cell.wide { width: 78px; margin-left: auto; }
.status .cell:nth-child(4) { width: 34px; }
.pager { display: flex; gap: 4px; width: 42px; border-left: 1px solid #ccc; }
.pager svg { width: 6px; height: 6px; }
.views { display: flex; gap: 6px; padding: 0 4px 0 4px; border-left: 1px solid #ccc; }
.views svg { width: 7px; height: 7px; }

.taskbar { display: flex; align-items: stretch; height: 25px; background: #040b14; }
.taskbar button { display: grid; place-items: center; width: 30px; border-bottom: 1px solid transparent; }
.taskbar button svg { width: 14px; height: 14px; }
.taskbar .start svg { width: 10px; height: 10px; }
.taskbar .view { width: 32px; padding-right: 4px; }
.taskbar .view svg { width: 11px; height: 11px; }
.taskbar .open { border-bottom-color: #7ba7cf; }
.taskbar .active { background: #3b4149; }
.search { display: flex; align-items: center; width: 214px; padding: 0 6px 0 5px; background: #f1f1f1; }
.search svg { width: 14px; height: 14px; }
.search input { flex: 1; min-width: 0; margin-left: 6px; color: #333; font: 8px/12px "Noto Sans", sans-serif; }
.search input::placeholder { color: #333; opacity: 1; }
.tray { display: flex; align-items: center; gap: 3px; margin-left: auto; padding-right: 12px; color: #fff; font-family: "Open Sans", sans-serif; }
.tray svg { width: 12px; height: 12px; }
.tray .gap-before { margin-left: 7px; }
.tray time { width: 38px; line-height: 11px; text-align: center; }
.tray .note { width: 16px; height: 16px; margin-left: 2px; }
.note text { fill: #fff; font-size: 7px; }
```
